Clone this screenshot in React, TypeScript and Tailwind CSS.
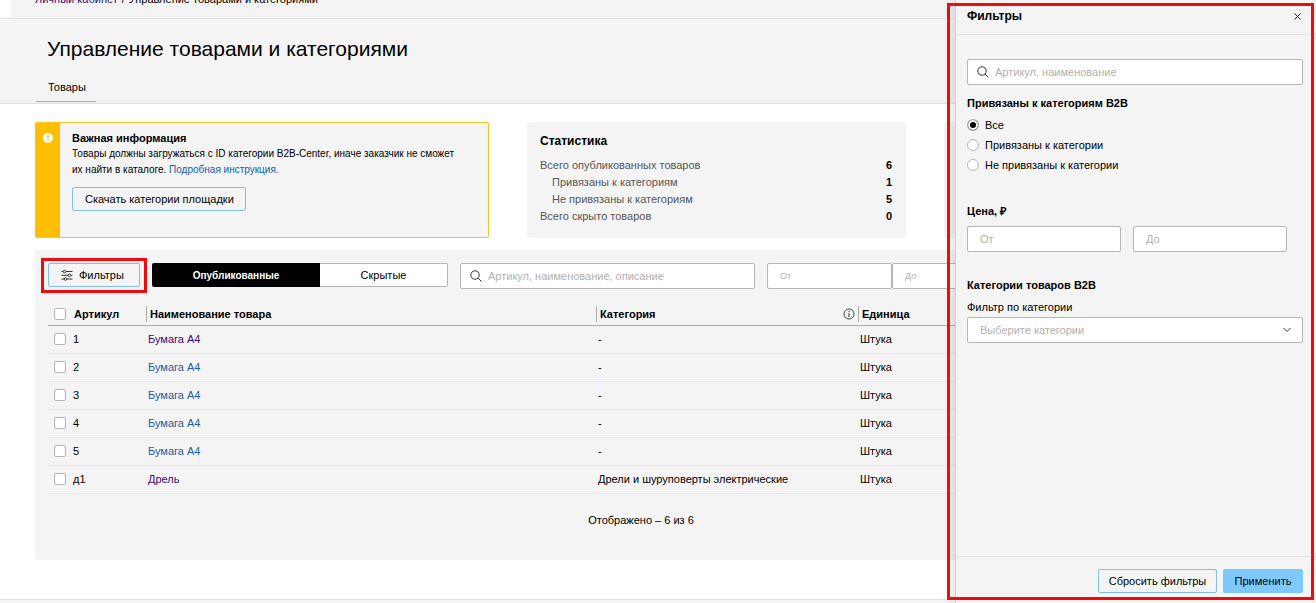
import type { ReactNode } from "react";
import clsx from "clsx";

const products = [
  { article: "1", name: "Бумага А4", category: "-", unit: "Штука", visited: true },
  { article: "2", name: "Бумага А4", category: "-", unit: "Штука", visited: false },
  { article: "3", name: "Бумага А4", category: "-", unit: "Штука", visited: false },
  { article: "4", name: "Бумага А4", category: "-", unit: "Штука", visited: false },
  { article: "5", name: "Бумага А4", category: "-", unit: "Штука", visited: false },
  {
    article: "д1",
    name: "Дрель",
    category: "Дрели и шуруповерты электрические",
    unit: "Штука",
    visited: true,
  },
];

const stats = [
  { label: "Всего опубликованных товаров", value: 6, nested: false },
  { label: "Привязаны к категориям", value: 1, nested: true },
  { label: "Не привязаны к категориям", value: 5, nested: true },
  { label: "Всего скрыто товаров", value: 0, nested: false },
];

const bindings = ["Все", "Привязаны к категории", "Не привязаны к категории"];

const fieldClass =
  "h-[26px] rounded-xs border border-[#b5b5b5] bg-white placeholder:text-[#b0b0b0] outline-none";

function SearchIcon() {
  return (
    <svg
      className="pointer-events-none absolute top-[7px] left-[10px] size-3"
      viewBox="0 0 12 12"
      fill="none"
      stroke="#333"
      strokeWidth="1"
    >
      <circle cx="5" cy="5" r="4.2" />
      <path d="M8 8l3.4 3.4" />
    </svg>
  );
}

function SlidersIcon() {
  return (
    <svg className="h-3 w-3" viewBox="0 0 12 12" fill="none" stroke="#333" strokeWidth="1">
      <path d="M0.5 2.5H2M5 2.5H11.5M0.5 6.3H7M10 6.3H11.5M0.5 10H3M6 10H11.5" />
      <circle cx="3.5" cy="2.5" r="1.3" />
      <circle cx="8.5" cy="6.3" r="1.3" />
      <circle cx="4.5" cy="10" r="1.3" />
    </svg>
  );
}

function Checkbox({ label }: { label: string }) {
  return (
    <input
      type="checkbox"
      aria-label={label}
      className="size-3 shrink-0 appearance-none rounded-xs border border-[#b5b5b5] bg-white checked:bg-[#7cc8ff]"
    />
  );
}

function HeadCell({ children }: { children: ReactNode }) {
  return (
    <th className="p-0 text-left font-bold">
      <div className="flex h-4 items-center border-l border-[#aaa] pl-[3px]">{children}</div>
    </th>
  );
}

function PageHeader() {
  return (
    <header className="bg-[#f4f4f4]">
      <div className="flex border-b border-[#e2e2e2]">
        <div className="-mt-[9px] h-[26px] w-[11px] bg-white" />
        <nav className="-mt-[9px] flex h-[27px] gap-1 pl-6 leading-4">
          <a href="#" className="text-[#3b0a78]">
            Личный кабинет
          </a>
          <span>/</span>
          <span>Управление товарами и категориями</span>
        </nav>
      </div>
      <div className="border-b border-[#e0e0e0] pt-[18px] pb-px">
        <h1 className="pl-[47px] text-[21px] leading-6">Управление товарами и категориями</h1>
        <div className="mt-4 flex pl-9">
          <a
            href="#"
            className="h-[25px] w-[60px] border-b border-[#6fbcec] pl-3 leading-5"
          >
            Товары
          </a>
        </div>
      </div>
    </header>
  );
}

function Notice() {
  return (
    <section className="flex rounded-xs border border-[#fcc21b] bg-[#f4f4f4]">
      <div className="w-6 shrink-0 bg-[#ffbf00] pt-[10px] pl-[7px]">
        <svg className="size-[10px]" viewBox="0 0 10 10">
          <circle cx="5" cy="5" r="5" fill="#fff" />
          <path d="M5 2v3.6M5 6.7v1.3" stroke="#ffbf00" strokeWidth="1.4" />
        </svg>
      </div>
      <div className="pt-[7px] pr-6 pl-3">
        <h2 className="font-bold leading-4">Важная информация</h2>
        <p className="text-[10px] leading-4">
          Товары должны загружаться с ID категории B2B-Center, иначе заказчик не сможет их найти в
          каталоге.{" "}
          <a href="#" className="text-[#1160a8]">
            Подробная инструкция.
          </a>
        </p>
        <button className="mt-[9px] h-6 w-[174px] rounded-xs border border-[#84bde6] pl-3 text-left">
          Скачать категории площадки
        </button>
      </div>
    </section>
  );
}

function Statistics() {
  return (
    <section className="rounded-sm bg-[#f4f4f4] pt-[9px] pr-[14px] pl-[13px]">
      <h2 className="mb-[6px] text-[12px] leading-5 font-bold">Статистика</h2>
      <dl>
        {stats.map((row) => (
          <div key={row.label} className="flex justify-between leading-[17px]">
            <dt className={clsx("text-[#555]", row.nested && "pl-3")}>{row.label}</dt>
            <dd className="font-bold">{row.value}</dd>
          </div>
        ))}
      </dl>
    </section>
  );
}

function Toolbar() {
  return (
    <div className="flex h-[26px] items-start">
      <div className="relative mr-3">
        <button className="flex h-6 w-[92px] items-center gap-[6px] rounded-xs border border-[#84bde6] pl-3">
          <SlidersIcon />
          Фильтры
        </button>
        <div className="pointer-events-none absolute -inset-x-[7px] -top-[5px] -bottom-[6px] border-3 border-[#ee0a0e]" />
      </div>
      <div className="mr-3 flex h-6">
        <button className="w-[168px] rounded-l-xs bg-black text-[10px] font-bold text-white">
          Опубликованные
        </button>
        <button className="w-32 rounded-r-xs border border-l-0 border-[#b5b5b5] bg-white">
          Скрытые
        </button>
      </div>
      <div className="relative mr-3">
        <SearchIcon />
        <input
          type="text"
          aria-label="Поиск товаров"
          placeholder="Артикул, наименование, описание"
          className={clsx(fieldClass, "w-[295px] pl-[27px]")}
        />
      </div>
      <input
        type="text"
        aria-label="Цена от"
        placeholder="От"
        className={clsx(fieldClass, "w-[125px] pl-3 text-[9px]")}
      />
      <input
        type="text"
        aria-label="Цена до"
        placeholder="До"
        className={clsx(fieldClass, "w-[125px] pl-3 text-[9px]")}
      />
    </div>
  );
}

function ProductsTable() {
  return (
    <table className="mt-[14px] w-full table-fixed border-collapse">
      <colgroup>
        <col className="w-[98px]" />
        <col className="w-[450px]" />
        <col className="w-[262px]" />
        <col />
      </colgroup>
      <thead>
        <tr className="h-[22px] border-b border-[#aaa]">
          <th className="p-0 text-left font-bold">
            <div className="flex items-center gap-2 pl-[6px]">
              <Checkbox label="Выбрать все" />
              Артикул
            </div>
          </th>
          <HeadCell>Наименование товара</HeadCell>
          <HeadCell>
            <span className="flex-1">Категория</span>
            <svg className="mr-[3px] size-3" viewBox="0 0 12 12" fill="none" stroke="#333">
              <circle cx="6" cy="6" r="5" strokeWidth="0.9" />
              <path d="M6 5v4M6 3v1.1" />
            </svg>
          </HeadCell>
          <HeadCell>Единица</HeadCell>
        </tr>
      </thead>
      <tbody>
        {products.map((product) => (
          <tr key={product.article} className="h-7 border-b border-[#e4e4e4]">
            <td className="p-0">
              <div className="flex items-center gap-[7px] pl-[6px]">
                <Checkbox label={`Выбрать ${product.article}`} />
                {product.article}
              </div>
            </td>
            <td className="p-0 pl-[2px]">
              <a href="#" className={product.visited ? "text-[#3b0a78]" : "text-[#1a5c9c]"}>
                {product.name}
              </a>
            </td>
            <td className="p-0 pl-[2px]">{product.category}</td>
            <td className="p-0 pl-[2px]">{product.unit}</td>
          </tr>
        ))}
      </tbody>
    </table>
  );
}

function FiltersDrawer() {
  return (
    <aside className="absolute inset-y-0 right-0 flex w-[361px] flex-col border-l border-[#d0d0d0] bg-[#f4f4f4] shadow-[-3px_0_8px_rgba(0,0,0,0.12)]">
      <div className="flex h-[35px] items-center justify-between border-b border-[#e2e2e2] pr-[15px] pb-[2px] pl-[11px]">
        <h2 className="text-[12px] leading-4 font-bold">Фильтры</h2>
        <button aria-label="Закрыть">
          <svg className="size-[7px]" viewBox="0 0 7 7" stroke="#222" strokeWidth="1">
            <path d="M0.5 0.5l6 6M6.5 0.5l-6 6" />
          </svg>
        </button>
      </div>

      <div className="flex-1 pt-6 pr-[13px] pl-[11px]">
        <div className="relative">
          <SearchIcon />
          <input
            type="text"
            aria-label="Артикул, наименование"
            placeholder="Артикул, наименование"
            className={clsx(fieldClass, "w-full pl-[27px]")}
          />
        </div>

        <fieldset className="mt-[10px]">
          <legend className="mb-1 leading-4 font-bold">Привязаны к категориям B2B</legend>
          {bindings.map((name, i) => (
            <label key={name} className="flex h-5 items-center gap-[6px]">
              <input
                type="radio"
                name="binding"
                defaultChecked={i === 0}
                className="size-3 appearance-none rounded-full border border-[#b5b5b5] bg-white checked:bg-black checked:shadow-[inset_0_0_0_2px_white]"
              />
              {name}
            </label>
          ))}
        </fieldset>

        <h3 className="mt-7 leading-4 font-bold">Цена, ₽</h3>
        <div className="mt-[7px] flex gap-3 pr-4">
          <input
            type="text"
            aria-label="Цена от"
            placeholder="От"
            className={clsx(fieldClass, "min-w-0 flex-1 pl-3")}
          />
          <input
            type="text"
            aria-label="Цена до"
            placeholder="До"
            className={clsx(fieldClass, "min-w-0 flex-1 pl-3")}
          />
        </div>

        <h3 className="mt-[25px] leading-4 font-bold">Категории товаров B2B</h3>
        <label htmlFor="category" className="mt-[6px] block leading-4">
          Фильтр по категории
        </label>
        <div className="relative mt-[2px]">
          <select
            id="category"
            className={clsx(fieldClass, "w-full appearance-none pl-3 text-[#b0b0b0]")}
          >
            <option>Выберите категории</option>
          </select>
          <svg
            className="pointer-events-none absolute top-[10px] right-3 h-[6px] w-2"
            viewBox="0 0 8 6"
            fill="none"
            stroke="#333"
          >
            <path d="M0.5 1l3.5 3.5L7.5 1" />
          </svg>
        </div>
      </div>

      <div className="flex justify-end gap-[6px] border-t border-[#e2e2e2] pt-3 pr-[13px] pb-[10px]">
        <button className="h-6 w-[119px] rounded-xs border border-[#84bde6]">
          Сбросить фильтры
        </button>
        <button className="h-6 w-20 rounded-xs bg-[#7cc8ff]">Применить</button>
      </div>
    </aside>
  );
}

export default function App() {
  return (
    <div className="relative h-screen overflow-hidden bg-white font-['Liberation_Sans',Arial,sans-serif] text-[11px] text-black">
      <PageHeader />
      <main className="pt-[18px] pr-[69px] pl-[35px]">
        <div className="grid h-[116px] grid-cols-[454px_379px_1fr] gap-x-[38px]">
          <Notice />
          <Statistics />
          <section className="rounded-sm bg-[#f4f4f4]" />
        </div>
        <section className="mt-3 rounded-sm bg-[#f4f4f4] px-[13px] pt-[13px] pb-8">
          <Toolbar />
          <ProductsTable />
          <p className="mt-[18px] text-center leading-4">Отображено – 6 из 6</p>
        </section>
      </main>
      <footer className="mt-[39px] h-6 border-t border-[#e0e0e0] bg-[#f4f4f4]" />

      <FiltersDrawer />
      {/* highlight around the drawer */}
      <div className="pointer-events-none absolute top-[3px] right-[2px] bottom-[3px] w-[367px] border-3 border-[#ee0a0e]" />
    </div>
  );
}
